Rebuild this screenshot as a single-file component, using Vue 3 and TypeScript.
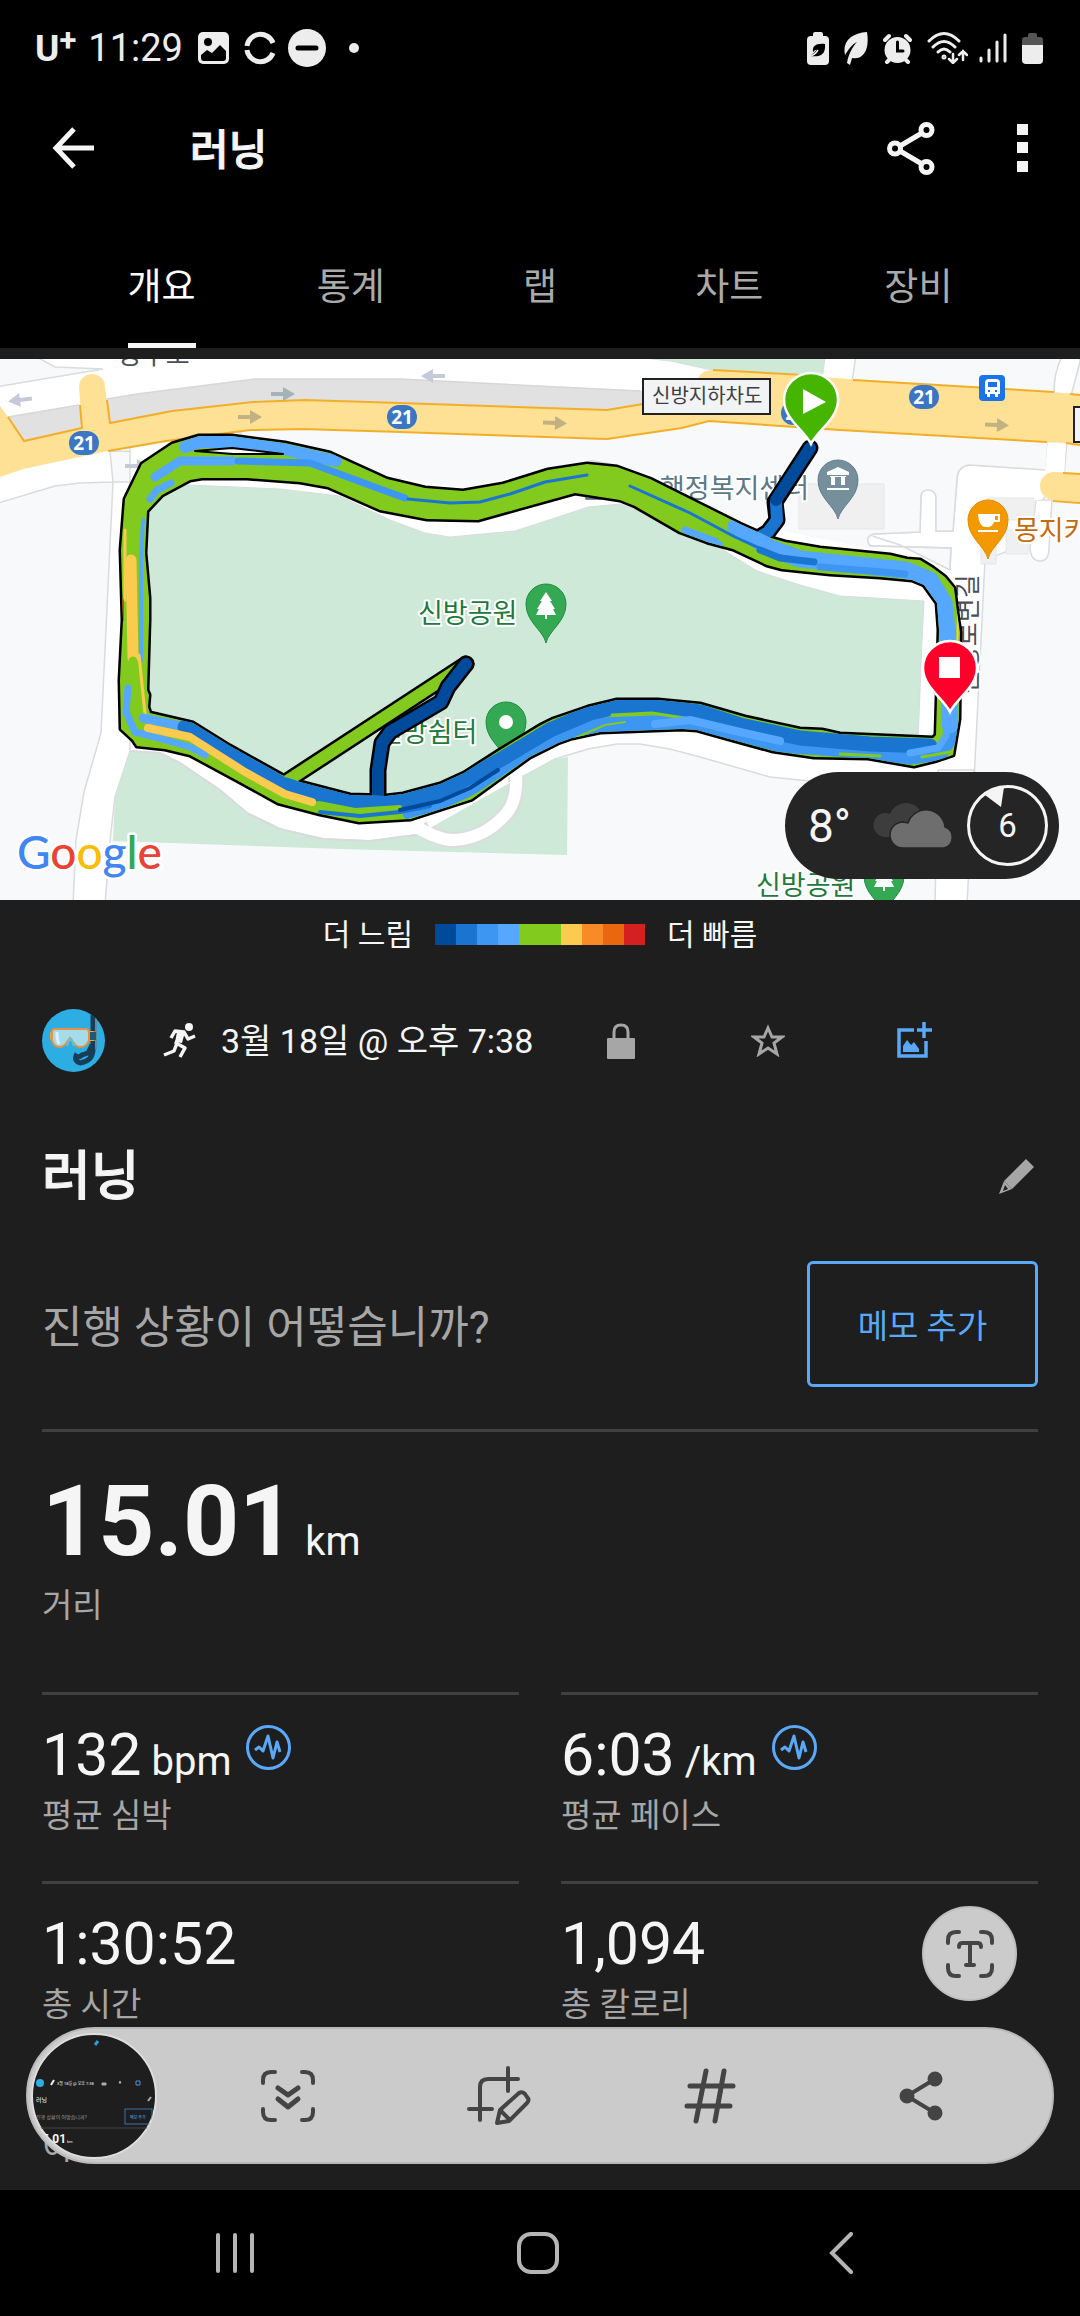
<script setup lang="ts">
import { ref } from 'vue'

interface Stat {
  value: string
  unit?: string
  label: string
  graph?: boolean
}

interface Shield {
  x: number
  y: number
}

interface RoadArrow {
  x: number
  y: number
  turn: number
  color: string
}

const tabs: string[] = ['개요', '통계', '랩', '차트', '장비']
const activeTab = ref<string>('개요')

const paceColors: string[] = [
  '#004a9c', '#1a75d1', '#3d97f2', '#55a7ff', '#82ca1e',
  '#82ca1e', '#facb4f', '#f98b26', '#e9670f', '#d42020',
]

const stats: Stat[] = [
  { value: '132', unit: 'bpm', label: '평균 심박', graph: true },
  { value: '6:03', unit: '/km', label: '평균 페이스', graph: true },
  { value: '1:30:52', label: '총 시간' },
  { value: '1,094', label: '총 칼로리' },
]

const shields: Shield[] = [
  { x: 84, y: 443 },
  { x: 402, y: 417 },
  { x: 796, y: 413 },
  { x: 924, y: 397 },
]

const roadArrows: RoadArrow[] = [
  { x: 20, y: 400, turn: 173, color: '#c5c9da' },
  { x: 433, y: 376, turn: 180, color: '#c5c9da' },
  { x: 137, y: 466, turn: 0, color: '#c5c9da' },
  { x: 283, y: 394, turn: 0, color: '#a5b3b8' },
  { x: 250, y: 417, turn: 0, color: '#c2b283' },
  { x: 555, y: 423, turn: 2, color: '#c2b283' },
  { x: 997, y: 425, turn: 2, color: '#c2b283' },
]

const loopOuter =
  'M125 499L142 464L172 444L199 436L232 436L285 443L330 453L387 479L425 488L463 491L503 484L548 470L587 464L617 467L650 479L740 524L771 538L785 542L820 548L890 555L907 559L920 560L933 568L945 577L954 588L958 620L960 632L959 719L953 755L938 760L914 766L868 758L814 757L773 751L740 742L697 730L682 729L600 732L572 738L558 743L530 757L472 799L410 819L359 822L320 814L278 803L240 782L190 755L165 749L137 746L133 740L121 729L120 680L123 620L121 550Z'
const loopInner =
  'M147 511L162 495L190 480L202 478L247 478L300 482L328 487L380 510L427 519L478 520L575 493L620 500L635 506L680 532L707 542L733 549L767 565L782 569L830 574L880 577L912 580L924 585L937 603L939 630L936 735L933 738L840 734L822 730L800 729L745 717L700 704L658 700L617 700L588 707L553 719L541 725L500 750L464 773L440 784L403 794L386 796L350 795L300 782L282 775L230 746L193 723L150 713L148 707L149 695L147 690L149 620L149 598L145 553Z'
const loopBand = loopOuter + loopInner
const placePin = 'M0 39C-3 26-20 18-20 0A20 20 0 1 1 20 0C20 18 3 26 0 39Z'
const routePin = 'M0 44C-6 31-27 19-27 0A27 27 0 1 1 27 0C27 19 6 31 0 44Z'
</script>

<template>
  <div class="screen">
    <header class="top">
      <div class="status">
        <div class="status-left">
          <span class="carrier">U<sup>+</sup></span>
          <time class="clock">11:29</time>
          <svg class="s-image" width="31" height="32" viewBox="0 0 31 32">
            <rect width="31" height="32" rx="5" fill="#ededed" />
            <circle cx="10" cy="10" r="4" fill="#000" />
            <path d="M3 23L9 18L14 21L22 13L28 19V26Q28 29 25 29H6Q3 29 3 26Z" fill="#000" />
          </svg>
          <svg class="s-sync" width="32" height="34" viewBox="0 0 32 34" fill="none" stroke="#ededed" stroke-width="5">
            <path d="M3 15A13.500 13.500 0 0 1 29 12" />
            <path d="M3 19A13.500 13.500 0 0 0 29 22" />
          </svg>
          <svg class="s-dnd" width="40" height="40" viewBox="0 0 40 40">
            <circle cx="20" cy="20" r="19" fill="#ededed" />
            <path d="M11 20H29" stroke="#000" stroke-width="5" stroke-linecap="round" />
          </svg>
          <svg class="s-dot" width="10" height="10" viewBox="0 0 10 10"><circle cx="5" cy="5" r="5" fill="#ededed" /></svg>
        </div>
        <div class="status-right">
          <svg width="22" height="33" viewBox="0 0 22 33">
            <path d="M6 4V2Q6 0 8 0H14Q16 0 16 2V4H18Q22 4 22 8V29Q22 33 18 33H4Q0 33 0 29V8Q0 4 4 4Z" fill="#ededed" />
            <path d="M18 12C9 11 5 14 6 20C10 16 12 17 3 24C12 25 19 24 18 12Z" fill="#000" />
            <path d="M3 24Q8 23 11 18" stroke="#ededed" stroke-width="1.500" fill="none" />
          </svg>
          <svg width="24" height="33" viewBox="0 0 24 33">
            <path d="M23 0C8 1-2 9 1 23C4 18 8 12 13 10C8 15 4 24 3 31L6 33L8 26C19 28 26 18 23 0Z" fill="#ededed" />
          </svg>
          <svg width="29" height="31" viewBox="0 0 29 31">
            <circle cx="14.500" cy="17" r="13" fill="#ededed" />
            <path d="M2 7L6 3M27 7L23 3M4 29L7 26M25 29L22 26" stroke="#ededed" stroke-width="4" stroke-linecap="round" />
            <path d="M14.500 9V18H20" fill="none" stroke="#000" stroke-width="3" stroke-linecap="round" />
          </svg>
          <svg class="s-wifi" width="41" height="32" viewBox="0 0 41 32" fill="none" stroke="#ededed" stroke-width="3" stroke-linecap="round">
            <path d="M2 9Q17-6 32 9M6 15Q17 4 28 15M11 20Q17 14 23 20" />
            <circle cx="17" cy="25" r="1" />
            <path d="M26 22V30M22 27L26 31L30 27M36 28V19M32 23L36 19L40 23" stroke-width="2.500" />
          </svg>
          <svg width="28" height="30" viewBox="0 0 28 30" stroke="#ededed" stroke-width="3" stroke-linecap="round">
            <path d="M2 25V28M10 17V28M18 9V28M26 2V28" />
          </svg>
          <svg width="21" height="31" viewBox="0 0 21 31">
            <path d="M6 4V2Q6 0 8 0H13Q15 0 15 2V4H18Q21 4 21 7V13H0V7Q0 4 3 4Z" fill="#555" />
            <path d="M0 12H21V27Q21 31 17 31H4Q0 31 0 27Z" fill="#ededed" />
          </svg>
        </div>
      </div>

      <div class="appbar">
        <button class="icon-btn back" type="button" aria-label="뒤로">
          <svg width="42" height="42" viewBox="0 0 42 42" fill="none" stroke="#f5f5f5" stroke-width="5">
            <path d="M22 2L4 21L22 40M4 21H42" />
          </svg>
        </button>
        <h1 class="app-title">러닝</h1>
        <button class="icon-btn share" type="button" aria-label="공유">
          <svg width="48" height="53" viewBox="0 0 48 53" fill="none" stroke="#f5f5f5" stroke-width="5">
            <circle cx="8" cy="26.500" r="5.500" /><circle cx="39.500" cy="8" r="5.500" /><circle cx="39.500" cy="45" r="5.500" />
            <path d="M13 24L35 11M13 29L35 42" />
          </svg>
        </button>
        <button class="icon-btn" type="button" aria-label="더보기">
          <svg width="11" height="48" viewBox="0 0 11 48" fill="#f5f5f5">
            <path d="M0 0H11V11H0ZM0 18H11V29H0ZM0 37H11V48H0Z" />
          </svg>
        </button>
      </div>

      <nav class="tabs">
        <button
          v-for="tab in tabs"
          :key="tab"
          type="button"
          class="tab"
          :class="{ active: tab === activeTab }"
          @click="activeTab = tab"
        >
          <span>{{ tab }}</span>
        </button>
      </nav>
    </header>

    <main class="content">
      <section class="map">
        <svg class="map-canvas" viewBox="0 359 1080 541" role="img" aria-label="지도">
          <defs>
            <clipPath id="loop-clip"><path :d="loopBand" clip-rule="evenodd" /></clipPath>
          </defs>
          <rect y="359" width="1080" height="541" fill="#f8f9fb" />

          <!-- streets -->
          <g fill="#fff" stroke="#dadbdf" stroke-width="1.500">
            <path d="M-5 387L103 369L55 367L33 355H620L672 361L713 370V440H300L180 452L110 451L113 482L80 483L55 486L-5 504Z" />
            <path d="M113 482L106 630L101 733L84 792L76 840L73 905H105L110 840L115 797L130 751L150 700V482Z" />
            <path d="M130 751L160 753L180 763L220 790L247 813L280 829L323 839L370 841L415 835L555 759L588 749L617 744L640 744L670 749L700 757L770 777L810 781H974L985 560L1036 540L1049 472H1045L970 465Q957 466 957 480L953 531H936V497Q935 490 928 490Q921 490 921 497L920 532L874 534Q866 536 868 542Q869 547 874 546L951 548L950 570L900 545L700 480L560 455L400 478L230 430L130 440Z" />
            <path d="M974 770L967 905H935L938 770Z" />
            <path d="M825 355L822 378L852 382L856 355ZM1063 355Q1054 370 1054 393L1071 396L1080 362V355ZM1048 440L1045 474L1064 476L1067 440Z" />
            <path d="M1036 500L1030 548Q1031 561 1040 561Q1049 561 1049 548L1052 500Z" />
          </g>
          <path d="M958 480Q960 466 974 466L1045 470L1048 440H1066L1064 480L1040 500L984 505L984 560L956 560Z" fill="#fff" />
          <path d="M182 452L250 431L302 429L400 433L607 440L682 429L709 422L840 431L1047 443L1045 470L970 465Q957 466 957 480L953 531H936V497Q935 490 928 490Q921 490 921 497L920 532L874 534L868 546L905 556L740 522L600 458L463 488L387 476L330 450L232 433Z" fill="#f8f9fb" />
          <path d="M799 484H884V529H799ZM987 498H1034V520H1008V510H987ZM1006 530H1028V554H1006ZM981 545H996V564H981Z" fill="#f0f0f0" stroke="#e7e7e8" />
          <path d="M1045 470L970 465Q957 466 957 480L953 531H936V497Q935 490 928 490Q921 490 921 497L920 532L874 534Q866 536 868 542Q869 547 874 546L951 548L950 570" fill="none" stroke="#dadbdf" stroke-width="1.500" />

          <path d="M620 355L672 361L713 370L823 376L825 355Z" fill="#cee9d7" />
          <path d="M8 417L79 405L137 394L255 379H400L440 381L713 394V420L300 428L24 445Z" fill="#e1e1e1" />
          <path d="M8 417L79 405M107 399L137 394L255 379H400L440 381L640 391" fill="none" stroke="#d6d7da" stroke-width="1.500" />

          <!-- highway -->
          <path d="M0 406L8 417L24 441L82 428L79 387A13 13 0 0 1 105 387L110 423L172 411L253 402L305 400L400 403L607 410L643 404L697 384Q697 371 713 370L1080 394V444L840 430L709 421L682 428L607 439L302 429L250 430L166 441L108 451L23 469L0 477Z" fill="#fee194" />
          <path d="M1080 473L1054 472A14 14 0 0 0 1054 500L1080 502Z" fill="#fee194" />
          <path d="M8 417L24 441L82 428L80 405M107 400L110 423L172 411L253 402L305 400L400 403L607 410L643 404M713 370L822 376M853 380L1054 392M1070 394L1080 395M108 451L166 441L250 430L302 429L400 432L607 439L682 428L709 421L840 430L1047 442M1066 443L1080 445M1063 473L1080 474M1053 501L1080 503" fill="none" stroke="#f3ae29" stroke-width="2" />

          <!-- parks -->
          <path d="M140 484L190 485L280 489L340 496L390 520L425 533L450 537L515 531L555 518L588 507L620 504L670 520L712 543L757 571L800 585L840 596L924 601L922 640L918 742L840 738L740 720L658 706L600 710L470 775L380 800L290 785L193 728L140 716Z" fill="#cee9d7" stroke="#d9dcdd" />
          <path d="M130 751L160 753L180 763L220 790L247 813L280 829L323 839L370 841L415 835L555 759L568 757L567 855L340 849L113 841L115 797Z" fill="#cee9d7" />
          <path d="M130 751L160 753L180 763L220 790L247 813L280 829L323 839L370 841L415 835" fill="none" stroke="#d9dadd" stroke-width="2" />
          <path d="M422 826Q440 841 455 840Q485 838 506 814Q518 800 516 776" fill="none" stroke="#dcdcdf" stroke-width="16" />
          <path d="M415 826Q440 841 455 840Q485 838 506 814Q518 800 516 772" fill="none" stroke="#fff" stroke-width="12" />
          <path d="M472 795L525 765L555 752L570 740L480 770L420 810L430 828L515 780" fill="#fff" />

          <g v-for="(a, i) in roadArrows" :key="i" :transform="`translate(${a.x} ${a.y}) rotate(${a.turn})`">
            <path d="M-12-2H0V-7L12 0L0 7V2H-12Z" :fill="a.color" />
          </g>

          <g v-for="s in shields" :key="s.x" :transform="`translate(${s.x} ${s.y})`">
            <rect x="-15" y="-12" width="30" height="24" rx="12" fill="#3a76c4" />
            <text class="shield" y="7">21</text>
          </g>

          <rect x="979" y="375" width="26" height="26" rx="4" fill="#1a73e8" />
          <path d="M985 383Q985 379 989 379H996Q1000 379 1000 383V394H998V397H995V394H990V397H987V394H985ZM988 382V387H997V382ZM988 390V392H990V390ZM995 390V392H997V390Z" fill="#fff" fill-rule="evenodd" />

          <rect x="643" y="379" width="127" height="35" fill="#f1f3f4" stroke="#202124" stroke-width="2" />
          <text class="place boxed" x="652" y="403">신방지하차도</text>
          <rect x="1074" y="407" width="20" height="35" fill="#f1f3f4" stroke="#202124" stroke-width="2" />
          <text class="place street" x="118" y="364">동수로</text>
          <text class="place street" transform="translate(977 694) rotate(-90)">신방로변길</text>

          <text class="place civic" x="809" y="498">신방동 행정복지센터</text>
          <text class="place park" x="418" y="623">신방공원</text>
          <text class="place park" x="378" y="742">신방쉼터</text>
          <text class="place park" x="756" y="895">신방공원</text>
          <text class="place food" x="1014" y="540">몽지카페</text>

          <g transform="translate(838 480)">
            <path :d="placePin" fill="#758f9d" stroke="#627f8e" />
            <path d="M-11-5V-8L0-13L11-8V-5ZM-11 8H11V10H-11ZM-8-4H8V-3H-8ZM-7-3H-3V5H-7ZM3-3H7V5H3Z" fill="#fff" />
          </g>
          <g transform="translate(988 520)">
            <path :d="placePin" fill="#f29900" stroke="#e68a00" />
            <path d="M-10-6H12V2H6Q4 8-2 7Q-9 7-10-6ZM7-4V0H10V-4ZM-10 10H10V12H-10Z" fill="#fff" fill-rule="evenodd" />
          </g>
          <g v-for="p in [{ x: 546, y: 604 }, { x: 884, y: 876 }]" :key="p.x" :transform="`translate(${p.x} ${p.y})`">
            <path :d="placePin" fill="#34a853" stroke="#1e8e3e" />
            <path d="M0-12L6-3H4L9 5H7L10 11H1V15H-1V11H-10L-7 5H-9L-4-3H-6Z" fill="#fff" />
          </g>
          <g transform="translate(506 722)">
            <path :d="placePin" fill="#34a853" stroke="#1e8e3e" />
            <circle r="7" fill="#fff" />
          </g>

          <!-- recorded track -->
          <path :d="loopBand" fill="none" stroke="#000" stroke-width="5" stroke-linejoin="round" />
          <g fill="none" stroke-linecap="round" stroke-linejoin="round">
            <path d="M284 783L466 664" stroke="#000" stroke-width="17" />
            <path d="M284 783L466 664" stroke="#82ca1e" stroke-width="12" />
            <path d="M378 800V770L382 743L390 732L441 702L448 687L466 664" stroke="#000" stroke-width="17" />
            <path d="M378 800V770L382 743L390 732L441 702L448 687L466 664" stroke="#004a9c" stroke-width="12" />
            <path d="M810 448L775 502L777 520L768 532L755 540" stroke="#000" stroke-width="17" />
            <path d="M776 502L777 520L768 532L755 540" stroke="#1a75d1" stroke-width="12" />
            <path d="M810 448L776 500" stroke="#004a9c" stroke-width="12" />
          </g>
          <path :d="loopBand" fill="#82ca1e" fill-rule="evenodd" />
          <g clip-path="url(#loop-clip)" fill="none" stroke-linecap="round" stroke-linejoin="round">
            <path d="M185 447L200 442L232 442L283 449L336 461" stroke="#55a7ff" stroke-width="12" />
            <path d="M155 477L180 461L232 461" stroke="#55a7ff" stroke-width="9" />
            <path d="M238 461L310 463L380 489L405 498" stroke="#3d97f2" stroke-width="7" />
            <path d="M195 451L232 448L283 454L233 454Z" fill="#fff" stroke="#000" stroke-width="2" />
            <path d="M408 499L450 503L480 502L510 494L545 482L587 475" stroke="#1a75d1" stroke-width="3" />
            <path d="M150 499L157 490L171 483" stroke="#55a7ff" stroke-width="7" />
            <path d="M125 530V600" stroke="#facb4f" stroke-width="3" />
            <path d="M123 600V620" stroke="#e9470f" stroke-width="2" />
            <path d="M143 520L141 560V660" stroke="#55a7ff" stroke-width="4" />
            <path d="M131 560L133 658" stroke="#facb4f" stroke-width="11" />
            <path d="M139 655L145 714" stroke="#facb4f" stroke-width="3" />
            <path d="M133 661L136 715" stroke="#82ca1e" stroke-width="9" />
            <path d="M128 688L126 712L135 732L155 737L190 747L205 755" stroke="#55a7ff" stroke-width="7" />
            <path d="M410 813L440 806L480 782L530 748L565 733L600 725L680 722L740 734L780 745L850 750L910 757L940 753L952 735" stroke="#3d97f2" stroke-width="15" />
            <path d="M410 820L440 812L470 799M500 742L470 761L440 778L400 789" stroke="#82ca1e" stroke-width="4" />
            <path d="M143 718L185 727" stroke="#55a7ff" stroke-width="9" />
            <path d="M185 727L193 731L236 757L282 784L318 794L350 801H400L445 790L500 760L550 730L590 713L617 707H660L700 712L740 725L800 738L870 744L930 746" stroke="#1a75d1" stroke-width="15" />
            <path d="M148 728L190 737L245 772L285 794L312 802" stroke="#facb4f" stroke-width="8" />
            <path d="M320 812L360 816L400 812L430 806" stroke="#1a75d1" stroke-width="4" />
            <path d="M319 803L355 810L400 807" stroke="#82ca1e" stroke-width="4" />
            <path d="M400 810L440 801L470 788L498 770" stroke="#004a9c" stroke-width="4" />
            <path d="M575 738L605 725L625 722" stroke="#82ca1e" stroke-width="2" />
            <path d="M612 715L652 713L684 718" stroke="#82ca1e" stroke-width="3" />
            <path d="M655 724L690 720L740 732L780 741" stroke="#55a7ff" stroke-width="8" />
            <path d="M840 754L880 756M922 757L950 752" stroke="#82ca1e" stroke-width="3" />
            <path d="M910 753L938 748L946 736L949 712" stroke="#55a7ff" stroke-width="7" />
            <path d="M950 725L948 640L944 603L930 580L905 570L800 559L770 548L736 527" stroke="#55a7ff" stroke-width="17" />
            <path d="M685 530L720 543" stroke="#55a7ff" stroke-width="7" />
            <path d="M820 567L870 571L905 574" stroke="#3d97f2" stroke-width="7" />
            <path d="M630 486L690 513L735 537L775 555L815 562" stroke="#1a75d1" stroke-width="3" />
            <path d="M760 550L780 558L814 562" stroke="#1a75d1" stroke-width="7" />
            <path d="M690 506L720 520M722 538L732 543" stroke="#82ca1e" stroke-width="8" />
            <path d="M958 615L957 660" stroke="#facb4f" stroke-width="2" />
          </g>

          <g transform="translate(811 400)">
            <path :d="routePin" fill="#45b500" stroke="#fff" stroke-width="2.500" />
            <path d="M-8-11L15 2L-8 14Z" fill="#fff" />
          </g>
          <g transform="translate(950 668)">
            <path :d="routePin" fill="#ff002b" stroke="#fff" stroke-width="2.500" />
            <rect x="-11" y="-11" width="21" height="21" fill="#fff" />
          </g>

          <text class="google" x="17" y="869"><tspan fill="#4285f4">G</tspan><tspan fill="#ea4335">o</tspan><tspan fill="#fbbc05">o</tspan><tspan fill="#4285f4">g</tspan><tspan fill="#34a853">l</tspan><tspan fill="#ea4335">e</tspan></text>
        </svg>

        <div class="weather">
          <span class="temp">8°</span>
          <svg width="83" height="47" viewBox="0 0 83 47">
            <path d="M12 35A12 12 0 0 1 13 11L17 12A17 17 0 0 1 48 10L42 35Z" fill="#3d3d3d" />
            <path d="M30 46A13 13 0 0 1 30 20L35 21A19 19 0 0 1 72 25A11 11 0 0 1 71 46Z" fill="#6e6e6e" stroke="#252525" stroke-width="1.500" />
          </svg>
          <span class="wind">
            <svg class="wind-dial" width="81" height="81" viewBox="0 0 81 81">
              <circle cx="40.500" cy="40.500" r="39" fill="none" stroke="#f5f5f5" stroke-width="3" />
              <path d="M18 10Q27 3 37 2L34 22Z" fill="#f5f5f5" />
            </svg>
            <span class="wind-speed">6</span>
          </span>
        </div>
      </section>

      <div class="legend">
        <span>더 느림</span>
        <span class="scale"><i v-for="(c, i) in paceColors" :key="i" :style="{ background: c }"></i></span>
        <span>더 빠름</span>
      </div>

      <div class="body">
        <div class="meta">
          <svg class="avatar" width="63" height="63" viewBox="0 0 63 63">
            <clipPath id="avatar-clip"><circle cx="31.500" cy="31.500" r="31.500" /></clipPath>
            <g clip-path="url(#avatar-clip)">
              <rect width="63" height="63" fill="#2caee3" />
              <path d="M51 6V40Q51 52 38 54Q32 52 34 47Q37 49 40 46L46 44L50 36" fill="none" stroke="#173e58" stroke-width="5" />
              <path d="M54 9V40" stroke="#5c8ba4" stroke-width="2" />
              <rect x="8" y="22" width="46" height="10" rx="3" fill="#eca53d" />
              <rect x="46" y="23" width="8" height="8" fill="#27566d" />
              <path d="M12 20H44Q47 20 47 24V31Q45 38 38 38Q34 38 31 33L28 29L25 33Q22 38 17 38Q11 37 10 31V24Q10 20 12 20Z" fill="#a5dceb" stroke="#e89143" stroke-width="2" />
              <path d="M15 23Q15 31 17 35" stroke="#d9f3fa" stroke-width="3" fill="none" />
              <path d="M28 29L25 37M29 29L32 37" stroke="#63bfe0" stroke-width="2" />
            </g>
          </svg>
          <svg class="runner" width="35" height="36" viewBox="0 0 35 36">
            <circle cx="26" cy="4" r="4" fill="#f5f5f5" />
            <path d="M20 9L13 20L22 25L17 34M14 20L11 28L1 32M8 15L12 8L21 9L25 16L32 13" fill="none" stroke="#f5f5f5" stroke-width="3.500" stroke-linejoin="round" />
            <path d="M14 9L22 9L19 20L12 19Z" fill="#f5f5f5" />
          </svg>
          <span class="date">3월 18일 @ 오후 7:38</span>
          <div class="actions">
            <button class="icon-btn" type="button" aria-label="비공개">
              <svg width="28" height="36" viewBox="0 0 28 36">
                <rect y="15" width="28" height="21" rx="1" fill="#a6a6a6" />
                <path d="M7 16V9Q7 2 14 2Q21 2 21 9V16" fill="none" stroke="#a6a6a6" stroke-width="3" />
              </svg>
            </button>
            <button class="icon-btn" type="button" aria-label="즐겨찾기">
              <svg width="34" height="33" viewBox="0 0 34 33">
                <path d="M17 4L21 13L31 13L23 19L26 30L17 24L8 30L11 19L3 13L13 13Z" fill="none" stroke="#a6a6a6" stroke-width="3" />
              </svg>
            </button>
            <button class="icon-btn" type="button" aria-label="사진 추가">
              <svg width="37" height="37" viewBox="0 0 37 37">
                <path d="M18 8H3V34H30V19M28 0V16M21 8H36" fill="none" stroke="#5aa9f8" stroke-width="3.500" />
                <path d="M7 30V24L11 18L15 23L18 20L23 27V30Z" fill="#5aa9f8" />
              </svg>
            </button>
          </div>
        </div>

        <div class="title-row">
          <h2 class="title">러닝</h2>
          <button class="icon-btn" type="button" aria-label="이름 편집">
            <svg width="36" height="36" viewBox="0 0 36 36" fill="#a6a6a6">
              <path d="M27 0L35 8L13 30L5 22Z" />
              <path d="M5 22L13 30L0 35ZM6 26L4 32L9 30Z" fill-rule="evenodd" />
            </svg>
          </button>
        </div>

        <div class="note-row">
          <p class="prompt">진행 상황이 어떻습니까?</p>
          <button class="note-btn" type="button">메모 추가</button>
        </div>

        <div class="distance">
          <p class="distance-value"><strong>15.01</strong><span class="unit">km</span></p>
          <p class="label">거리</p>
        </div>

        <div class="grid">
          <div v-for="s in stats" :key="s.label" class="cell">
            <div class="value">
              <span>{{ s.value }}</span>
              <span v-if="s.unit" class="unit">{{ s.unit }}</span>
              <svg v-if="s.graph" class="pulse" width="45" height="45" viewBox="0 0 45 45" fill="none" stroke="#5aa9f8">
                <circle cx="22.500" cy="22.500" r="21" stroke-width="3" />
                <path d="M9 25L13 22L17 26L22 11L27 33L31 17L34 27" stroke-width="3" stroke-linejoin="round" />
              </svg>
            </div>
            <p class="label">{{ s.label }}</p>
          </div>
        </div>
        <p class="label next">이동 시간</p>
      </div>
    </main>

    <button class="text-scan" type="button" aria-label="텍스트 추출">
      <svg width="48" height="48" viewBox="0 0 48 48" fill="none" stroke="#444" stroke-width="4" stroke-linecap="round">
        <path d="M2 13V10Q2 2 10 2H13M35 2H38Q46 2 46 10V13M46 35V38Q46 46 38 46H35M13 46H10Q2 46 2 38V35" />
        <path d="M13 17Q13 13 16 13H32Q35 13 35 17M24 13V35M20 35H28" />
      </svg>
    </button>

    <div class="capture-bar">
      <svg class="thumb" width="126" height="126" viewBox="0 0 126 126">
        <clipPath id="thumb-clip"><circle cx="63" cy="63" r="62" /></clipPath>
        <circle cx="63" cy="63" r="62" fill="#1e1e1e" stroke="#dedede" stroke-width="2" />
        <g clip-path="url(#thumb-clip)">
          <path d="M64 12L67 8" stroke="#2c9bd8" stroke-width="3" />
          <circle cx="9" cy="50" r="4" fill="#2caee3" />
          <path d="M20 52L23 47" stroke="#eee" stroke-width="2" />
          <text class="mini" x="26" y="52" font-size="4">3월 18일 @ 오후 7:38</text>
          <path d="M71 50H75V52H71ZM89 48L90 50H88Z" fill="#aaa" stroke="#aaa" />
          <path d="M105 48H109V52H105Z" fill="none" stroke="#4b90d8" />
          <text class="mini" x="5" y="69" font-size="6">러닝</text>
          <path d="M117 68L120 64" stroke="#aaa" stroke-width="2" />
          <text class="mini dim" x="5" y="86" font-size="5">진행 상황이 어떻습니까?</text>
          <rect x="94" y="76" width="27" height="15" fill="none" stroke="#3c70a8" />
          <text class="mini blue" x="99" y="86" font-size="4">메모 추가</text>
          <path d="M5 95H122" stroke="#444" stroke-width="1" />
          <text class="mini" x="4" y="110" font-size="12" font-weight="700">15.01</text>
          <text class="mini" x="36" y="110" font-size="4">km</text>
        </g>
      </svg>
      <button class="icon-btn" type="button" aria-label="스크롤 캡처">
        <svg width="54" height="54" viewBox="0 0 54 54" fill="none" stroke="#444" stroke-width="4" stroke-linecap="round" stroke-linejoin="round">
          <path d="M2 14V11Q2 3 10 3H14M41 3H44Q52 3 52 11V14M52 40V43Q52 51 44 51H41M14 51H10Q2 51 2 43V40" />
          <path d="M17 19L27 26L37 19M17 30L27 38L37 30" stroke-width="5" />
        </svg>
      </button>
      <button class="icon-btn" type="button" aria-label="자르기 및 편집">
        <svg width="64" height="62" viewBox="0 0 64 62" fill="none" stroke="#444" stroke-width="4" stroke-linecap="round" stroke-linejoin="round">
          <path d="M2 44H25M13 55V22Q13 14 21 14H51M41 3V26" />
          <path d="M30 58L33 45L52 28Q55 26 58 29L60 32Q63 35 60 38L42 56ZM34 46L42 54" />
        </svg>
      </button>
      <button class="icon-btn" type="button" aria-label="태그">
        <svg width="52" height="56" viewBox="0 0 52 56" fill="none" stroke="#444" stroke-width="5" stroke-linecap="round">
          <path d="M22 3L12 53M40 3L31 53M6 18H49M3 38H46" />
        </svg>
      </button>
      <button class="icon-btn" type="button" aria-label="공유">
        <svg width="44" height="50" viewBox="0 0 44 50" fill="#444" stroke="#444" stroke-width="4">
          <circle cx="8" cy="25" r="5.500" /><circle cx="36" cy="8" r="5.500" /><circle cx="36" cy="42" r="5.500" />
          <path d="M8 25L36 8M8 25L36 42" />
        </svg>
      </button>
    </div>

    <nav class="sysnav">
      <button class="icon-btn" type="button" aria-label="최근 앱">
        <svg width="38" height="42" viewBox="0 0 38 42" stroke="#b5b5b5" stroke-width="4" stroke-linecap="round">
          <path d="M2 3V39M19 3V39M36 3V39" />
        </svg>
      </button>
      <button class="icon-btn" type="button" aria-label="홈">
        <svg width="42" height="42" viewBox="0 0 42 42"><rect x="2" y="2" width="38" height="38" rx="12" fill="none" stroke="#b5b5b5" stroke-width="4" /></svg>
      </button>
      <button class="icon-btn" type="button" aria-label="뒤로">
        <svg width="24" height="42" viewBox="0 0 24 42" fill="none" stroke="#b5b5b5" stroke-width="4" stroke-linecap="round">
          <path d="M22 2L3 21L22 40" />
        </svg>
      </button>
    </nav>
  </div>
</template>

<style>
body {
  background: #000;
}
</style>

<style scoped>
.screen {
  position: relative;
  display: flex;
  flex-direction: column;
  min-height: 100vh;
  background: #1e1e1e;
  color: #f5f5f5;
  font-family: Roboto, "Noto Sans CJK KR", sans-serif;
}

h1,
h2,
p {
  margin: 0;
}

svg {
  display: block;
  flex: none;
}

button {
  padding: 0;
  border: 0;
  background: none;
  color: inherit;
  font-family: inherit;
}

.icon-btn {
  display: flex;
  align-items: center;
  justify-content: center;
}

.top {
  background: #000;
}

.status {
  display: flex;
  align-items: center;
  justify-content: space-between;
  height: 96px;
  padding: 0 37px 0 35px;
}

.status-left,
.status-right {
  display: flex;
  align-items: center;
}

.status-right {
  gap: 15px;
}

.s-wifi {
  margin-right: -4px;
}

.carrier {
  display: flex;
  align-items: center;
  height: 36px;
  color: #ededed;
  font-size: 37px;
  font-weight: 700;
}

.carrier sup {
  align-self: flex-start;
  font-size: 31px;
  line-height: 22px;
}

.clock {
  margin-left: 12px;
  color: #ededed;
  font-size: 38px;
}

.s-image {
  margin-left: 15px;
}

.s-sync {
  margin-left: 15px;
}

.s-dnd {
  margin-left: 11px;
}

.s-dot {
  margin-left: 22px;
}

.appbar {
  display: flex;
  align-items: center;
  height: 104px;
  padding: 0 52px;
}

.app-title {
  flex: 1;
  margin-left: 96px;
  padding-bottom: 3px;
  font-size: 42px;
  font-weight: 500;
  -webkit-text-stroke: 1px currentColor;
}

.share {
  margin-right: 82px;
}

.tabs {
  display: flex;
  height: 148px;
  padding: 0 67px;
}

.tab {
  display: flex;
  flex: 1;
  justify-content: center;
  color: #aaa;
  font-size: 37px;
  line-height: 44px;
}

.tab span {
  box-sizing: border-box;
  height: 148px;
  padding-top: 66px;
  border-bottom: 5px solid transparent;
}

.tab.active {
  color: #fff;
}

.tab.active span {
  border-color: #f5f5f5;
}

.content {
  flex: 1;
  padding-top: 11px;
}

.map {
  position: relative;
}

.map-canvas {
  width: 100%;
  height: auto;
}

.shield {
  fill: #fff;
  font: 700 19px "Noto Sans", sans-serif;
  text-anchor: middle;
}

.place {
  font-family: "Noto Sans CJK KR", sans-serif;
  font-size: 27px;
  paint-order: stroke;
  stroke: #fff;
  stroke-linejoin: round;
  stroke-width: 4px;
}

.boxed {
  fill: #3c4043;
  font-size: 20px;
  stroke: none;
}

.street {
  fill: #4a4f55;
  font-size: 26px;
}

.civic {
  fill: #5b7887;
  text-anchor: end;
}

.park {
  fill: #217a3c;
}

.food {
  fill: #c5690b;
}

.google {
  font: 500 46px Lato, sans-serif;
  paint-order: stroke;
  stroke: #fff;
  stroke-linejoin: round;
  stroke-width: 5px;
}

.weather {
  position: absolute;
  right: 21px;
  bottom: 21px;
  display: flex;
  align-items: center;
  height: 107px;
  padding: 0 11px 0 23px;
  border-radius: 54px;
  background: #252525;
}

.temp {
  width: 65px;
  font-size: 46px;
}

.wind {
  display: grid;
  place-items: center;
  margin-left: 11px;
}

.wind-dial,
.wind-speed {
  grid-area: 1 / 1;
}

.wind-speed {
  font-size: 33px;
}

.legend {
  display: flex;
  align-items: center;
  justify-content: center;
  gap: 22px;
  height: 68px;
  font-size: 30px;
}

.legend > span:not(.scale) {
  padding-bottom: 4px;
}

.scale {
  display: flex;
}

.scale i {
  width: 21px;
  height: 21px;
}

.body {
  padding: 41px 42px 0;
}

.meta {
  display: flex;
  align-items: center;
}

.runner {
  margin-left: 58px;
}

.date {
  margin-left: 23px;
  padding-bottom: 4px;
  font-size: 34px;
}

.actions {
  display: flex;
  margin-right: 50px;
  margin-left: auto;
}

.actions .icon-btn {
  width: 147px;
}

.title-row {
  display: flex;
  align-items: center;
  justify-content: space-between;
  margin-top: 73px;
  padding-right: 3px;
}

.title {
  font-size: 53px;
  font-weight: 500;
  line-height: 64px;
  -webkit-text-stroke: 1px currentColor;
}

.note-row {
  display: flex;
  align-items: center;
  justify-content: space-between;
  margin-top: 52px;
  padding-bottom: 42px;
  border-bottom: 3px solid #404040;
}

.prompt {
  color: #a6a6a6;
  font-size: 44px;
}

.note-btn {
  box-sizing: border-box;
  width: 231px;
  height: 126px;
  border: 3px solid #5aa9f8;
  border-radius: 6px;
  color: #5aa9f8;
  font-size: 33px;
}

.distance {
  padding: 40px 0 66px;
}

.distance-value {
  display: flex;
  align-items: baseline;
  height: 100px;
  line-height: 100px;
}

.distance-value strong {
  font-size: 98px;
}

.distance .label {
  margin-top: 14px;
}

.unit {
  margin-left: 10px;
  font-size: 40px;
  line-height: 40px;
}

.label {
  color: #a6a6a6;
  font-size: 33px;
  line-height: 40px;
}

.grid {
  display: grid;
  grid-template-columns: 1fr 1fr;
  column-gap: 42px;
}

.cell {
  padding: 30px 0 45px;
  border-top: 3px solid #404040;
}

.value {
  display: flex;
  align-items: baseline;
  height: 60px;
  font-size: 59px;
  line-height: 60px;
}

.pulse {
  align-self: flex-start;
  margin-left: 15px;
}

.cell .label {
  margin-top: 11px;
}

.next {
  height: 40px;
  margin-top: 58px;
  margin-bottom: 22px;
}

.text-scan {
  position: absolute;
  right: 63px;
  bottom: 315px;
  box-sizing: border-box;
  display: flex;
  align-items: center;
  justify-content: center;
  width: 95px;
  height: 95px;
  border: 2px solid #bdbdbd;
  border-radius: 50%;
  background: #cbcbcb;
}

.capture-bar {
  position: absolute;
  right: 26px;
  bottom: 152px;
  left: 26px;
  box-sizing: border-box;
  display: flex;
  align-items: center;
  height: 137px;
  padding: 0 25px 0 3px;
  border: 2px solid #b9b9b9;
  border-radius: 69px;
  background: #cbcbcb;
}

.thumb {
  margin-right: 25px;
}

.capture-bar .icon-btn {
  flex: 1;
}

.mini {
  fill: #f5f5f5;
}

.dim {
  fill: #999;
}

.blue {
  fill: #5aa9f8;
}

.sysnav {
  display: flex;
  height: 126px;
  padding: 0 88px 0 84px;
  background: #000;
}

.sysnav .icon-btn {
  flex: 1;
}
</style>
